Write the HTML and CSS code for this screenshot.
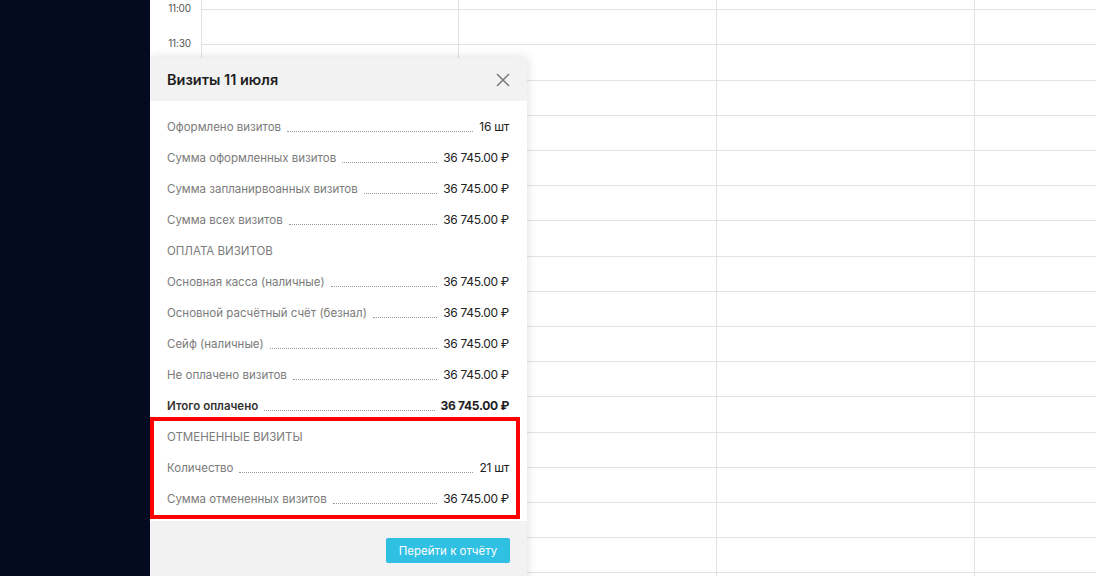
FILE: index.html
```html
<!DOCTYPE html>
<html lang="ru">
<head>
    <meta charset="UTF-8">
    <meta name="viewport" content="width=device-width, initial-scale=1.0">
    <title>Визиты</title>
    <link rel="stylesheet" href="styles.css">
</head>
<body>
    <div class="app">
        <aside class="sidebar"></aside>

        <main class="calendar">
            <div class="grid">
                <div class="times">
                    <div class="slot"><span>11:00</span></div>
                    <div class="slot"><span>11:30</span></div>
                </div>
                <div class="col"></div>
                <div class="col"></div>
                <div class="col"></div>
                <div class="col"></div>
            </div>

            <div class="popup">
                <div class="popup-head">
                    <h3>Визиты 11 июля</h3>
                    <button class="close" aria-label="Закрыть">
                        <svg width="14" height="14" viewBox="0 0 14 14"><path d="M1 1L13 13M13 1L1 13" stroke="#7a7a7a" stroke-width="1.5" fill="none"/></svg>
                    </button>
                </div>

                <div class="popup-body">
                    <div class="row"><span class="label">Оформлено визитов</span><span class="dots"></span><span class="value">16 шт</span></div>
                    <div class="row"><span class="label">Сумма оформленных визитов</span><span class="dots"></span><span class="value">36 745.00 ₽</span></div>
                    <div class="row"><span class="label">Сумма запланирвоанных визитов</span><span class="dots"></span><span class="value">36 745.00 ₽</span></div>
                    <div class="row"><span class="label">Сумма всех визитов</span><span class="dots"></span><span class="value">36 745.00 ₽</span></div>

                    <div class="row section">Оплата визитов</div>
                    <div class="row"><span class="label">Основная касса (наличные)</span><span class="dots"></span><span class="value">36 745.00 ₽</span></div>
                    <div class="row"><span class="label">Основной расчётный счёт (безнал)</span><span class="dots"></span><span class="value">36 745.00 ₽</span></div>
                    <div class="row"><span class="label">Сейф (наличные)</span><span class="dots"></span><span class="value">36 745.00 ₽</span></div>
                    <div class="row"><span class="label">Не оплачено визитов</span><span class="dots"></span><span class="value">36 745.00 ₽</span></div>
                    <div class="row total"><span class="label">Итого оплачено</span><span class="dots"></span><span class="value">36 745.00 ₽</span></div>

                    <div class="row section">Отмененные визиты</div>
                    <div class="row"><span class="label">Количество</span><span class="dots"></span><span class="value">21 шт</span></div>
                    <div class="row"><span class="label">Сумма отмененных визитов</span><span class="dots"></span><span class="value">36 745.00 ₽</span></div>
                </div>

                <div class="popup-foot">
                    <button class="report-btn">Перейти к отчёту</button>
                </div>

                <div class="highlight"></div>
            </div>
        </main>
    </div>
</body>
</html>
```

FILE: styles.css
```css
* { box-sizing: border-box; }
html, body { margin: 0; height: 100%; overflow: hidden; }
body {
    font-family: Inter, "Noto Sans", sans-serif;
    background: #fff;
    color: #222;
}
.app {
    display: flex;
    height: 576px;
}
.sidebar {
    width: 150px;
    flex: none;
    background: #040a1f;
}
.calendar {
    flex: 1;
    position: relative;
    overflow: hidden;
}
.grid {
    display: grid;
    grid-template-columns: 51px 257px 258px 258px 1fr;
    margin-top: -25px;
    height: 640px;
}
.times .slot {
    height: 35.2px;
    position: relative;
}
.times .slot span {
    position: absolute;
    bottom: -3.5px;
    left: 8px;
    right: 0;
    text-align: center;
    font-size: 10px;
    letter-spacing: -0.2px;
    color: #555;
}
.col {
    border-left: 1px solid #e2e2e2;
    background: repeating-linear-gradient(to bottom, transparent 0, transparent 34.2px, #e4e4e4 34.2px, #e4e4e4 35.2px);
}
.popup {
    position: absolute;
    left: 0;
    top: 58px;
    width: 377px;
    height: 530px;
    background: #fff;
    box-shadow: 0 0 10px rgba(0, 0, 0, 0.14);
}
.popup-head {
    height: 43px;
    background: #f2f2f2;
    display: flex;
    align-items: center;
    justify-content: space-between;
    padding: 0 17px;
}
.popup-head h3 {
    margin: 0;
    font-size: 14.5px;
    font-weight: 600;
    color: #1e1e1e;
}
.close {
    border: none;
    background: none;
    padding: 0;
    width: 14px;
    height: 14px;
    cursor: pointer;
}
.popup-body {
    padding: 10px 18px 7px 17px;
}
.row {
    height: 31px;
    display: flex;
    align-items: center;
    font-size: 11.5px;
}
.label { color: #7b7b7b; white-space: nowrap; }
.dots {
    flex: 1;
    align-self: center;
    height: 11px;
    margin: 0 6px;
    border-bottom: 1px dotted #9a9a9a;
}
.value {
    color: #222;
    font-size: 12px;
    letter-spacing: -0.3px;
    white-space: nowrap;
}
.section {
    text-transform: uppercase;
    color: #7b7b7b;
}
.total .label { color: #333; font-weight: 600; }
.total .value { font-weight: 700; }
.popup-foot {
    background: #f2f2f2;
    height: 70px;
    display: flex;
    justify-content: flex-end;
    align-items: flex-start;
    padding: 17px 17px 0;
}
.report-btn {
    width: 124px;
    height: 25px;
    border: none;
    border-radius: 2px;
    background: #30c0e3;
    color: #fff;
    font-family: inherit;
    font-size: 11.5px;
    cursor: pointer;
}
.highlight {
    position: absolute;
    left: 0;
    top: 359px;
    width: 370px;
    height: 102px;
    border: 4px solid #ff0000;
    pointer-events: none;
}
```
